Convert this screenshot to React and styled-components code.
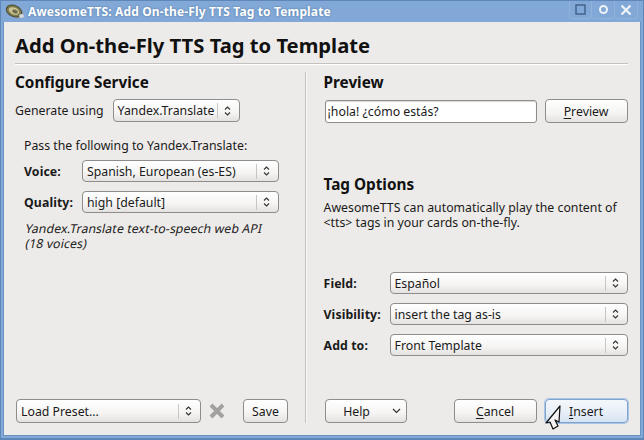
import styled, { createGlobalStyle } from 'styled-components';

const GlobalStyle = createGlobalStyle`
    html, body {
        margin: 0;
        padding: 0;
        background: #81a8d6;
    }
    * {
        box-sizing: border-box;
    }
`;

const Window = styled.div`
    position: relative;
    width: 644px;
    height: 440px;
    display: flex;
    flex-direction: column;
    background: #81a8d6;
    border: 1px solid #5f87ba;
    border-bottom-width: 2px;
    overflow: hidden;
    font-family: "Noto Sans", "Open Sans", sans-serif;
    font-size: 12.3px;
    color: #1a1a1a;
`;

const TitleBar = styled.div`
    height: 21px;
    flex: none;
    display: flex;
    align-items: center;
    padding: 0 5px 0 4px;
    color: #fff;
    font-weight: 700;
    font-size: 12px;
    letter-spacing: 0.14px;
    text-shadow: 0 0 2px #4d709c;
`;

const TitleText = styled.div`
    flex: 1;
    margin-left: 3px;
    white-space: nowrap;
`;

const WinButtons = styled.div`
    display: flex;
    margin-top: -3px;
`;

const WinButton = styled.div`
    width: 23px;
    height: 18px;
    display: flex;
    align-items: center;
    justify-content: center;
    border: 1px solid #90b3dc;
    border-top: none;
    border-left-width: ${p => (p.$first ? '1px' : '0')};
    border-radius: 0 0 3px 3px;
`;

const Body = styled.div`
    flex: 1;
    min-height: 0;
    margin: 0 2px 2px 2px;
    background: #edebe9;
    border: 1px solid #6c92c2;
    border-top: none;
    display: flex;
    flex-direction: column;
    padding: 0 12px 12px 11px;
`;

const Heading = styled.h1`
    margin: 0;
    height: 42px;
    padding-top: 9px;
    font-size: 20.2px;
    line-height: 28px;
    font-weight: 700;
    color: #111;
    white-space: nowrap;
    border-bottom: 1px solid #c4c2c0;
    box-shadow: 0 1px 0 #fff;
`;

const Columns = styled.div`
    flex: 1;
    min-height: 0;
    display: flex;
    padding-top: 8px;
`;

const Column = styled.div`
    display: flex;
    flex-direction: column;
    min-width: 0;
    width: ${p => p.$width}px;
`;

const Separator = styled.div`
    width: 1px;
    flex: none;
    margin: 0 18px 0 15px;
    background: #c4c2c0;
    box-shadow: 1px 0 0 #f8f7f6;
`;

const SectionTitle = styled.h2`
    margin: 0;
    font-size: 15.3px;
    line-height: 20px;
    font-weight: 700;
    color: #111;
    white-space: nowrap;
`;

const Row = styled.div`
    display: flex;
    align-items: center;
    margin-top: ${p => p.$top || 0}px;
    padding-left: ${p => p.$inset || 0}px;
    padding-right: ${p => p.$right || 0}px;
`;

const PlainLabel = styled.span`
    white-space: nowrap;
    margin-right: ${p => p.$gap || 0}px;
`;

const FieldLabel = styled.span`
    font-weight: 700;
    white-space: nowrap;
    width: ${p => p.$width}px;
    flex: none;
    letter-spacing: 0.1px;
`;

const Combo = styled.div`
    display: flex;
    align-items: center;
    width: ${p => (p.$width ? `${p.$width}px` : 'auto')};
    flex: ${p => (p.$width ? 'none' : 1)};
    height: ${p => p.$height || 22}px;
    padding: 0 7px 0 4px;
    border: 1px solid #8f8d8b;
    border-radius: 4px;
    background: linear-gradient(#ffffff, #f5f4f3 60%, #e4e2e0);
    white-space: nowrap;
`;

const ComboText = styled.span`
    flex: 1;
`;

const ComboDivider = styled.span`
    width: 1px;
    height: 15px;
    background: #c8c6c4;
    margin-right: 5px;
`;

const PassLine = styled.div`
    margin: 15px 0 0 9px;
    line-height: 17px;
    white-space: nowrap;
`;

const Note = styled.div`
    margin: 8px 0 0 9px;
    color: #222;
`;

const NoteLine = styled.div`
    height: 15px;
    line-height: 15px;
    letter-spacing: 0.1px;
    white-space: nowrap;
    transform: skewX(-12deg);
    transform-origin: 0 100%;
`;

const Footer = styled.div`
    margin-top: auto;
    padding-left: 1px;
    display: flex;
    align-items: center;
`;

const Button = styled.div`
    display: flex;
    align-items: center;
    justify-content: center;
    flex: none;
    width: ${p => p.$width}px;
    height: ${p => p.$height || 24}px;
    margin-left: ${p => p.$left || 0}px;
    border: 1px solid ${p => (p.$focus ? '#7ea3cf' : '#8f8d8b')};
    border-radius: 4px;
    background: ${p => (p.$focus
        ? 'linear-gradient(#f4f8fc, #e6eef7 60%, #d5e2f0)'
        : 'linear-gradient(#ffffff, #f5f4f3 60%, #e4e2e0)')};
    box-shadow: ${p => (p.$focus ? '0 0 0 1px #a9c4e4' : 'none')};
`;

const Mnemonic = styled.span`
    text-decoration: underline;
    text-underline-offset: 2px;
`;

const TextInput = styled.div`
    width: 212px;
    height: 23px;
    flex: none;
    display: flex;
    align-items: center;
    padding-left: 2px;
    background: #fff;
    border: 1px solid #8f8d8b;
    border-radius: 3px;
    box-shadow: inset 0 1px 1px #d8d8d8;
    white-space: nowrap;
`;

const Description = styled.div`
    margin-top: 6px;
`;

const DescriptionLine = styled.div`
    height: 15px;
    line-height: 15px;
    white-space: nowrap;
`;

const Spacer = styled.div`
    height: ${p => p.$height}px;
    flex: none;
`;

const HelpLabel = styled.span`
    flex: 1;
    text-align: center;
    padding-right: 4px;
`;

const Cursor = styled.svg`
    position: absolute;
    left: 543px;
    top: 404px;
`;

const Updown = () => (
    <svg width="9" height="12" viewBox="0 0 9 12" fill="none" stroke="#333" strokeWidth="1.1">
        <path d="M2 4.5 L4.5 2 L7 4.5" />
        <path d="M2 7.5 L4.5 10 L7 7.5" />
    </svg>
);

const Select = ({ value, width, height }) => (
    <Combo $width={width} $height={height}>
        <ComboText>{value}</ComboText>
        <ComboDivider />
        <Updown />
    </Combo>
);

const Speaker = () => (
    <svg width="20" height="17" viewBox="0 0 20 17">
        <path d="M6 2 L17 7 L19 13 L13 16 L3 10 Z" fill="#8e9aa8" />
        <ellipse cx="9" cy="8" rx="8" ry="5.5" fill="#7d7a4c" stroke="#4c4a30" strokeWidth="1" transform="rotate(22 9 8)" />
        <ellipse cx="9" cy="8" rx="5.5" ry="3.4" fill="#c9c596" transform="rotate(22 9 8)" />
        <ellipse cx="10" cy="8.5" rx="3" ry="1.8" fill="#6f6c4a" transform="rotate(22 10 8.5)" />
        <ellipse cx="16.5" cy="13" rx="2.5" ry="2" fill="#d5d8dc" />
    </svg>
);

const App = () => (
    <>
        <GlobalStyle />
        <Window>
            <TitleBar>
                <Speaker />
                <TitleText>AwesomeTTS: Add On-the-Fly TTS Tag to Template</TitleText>
                <WinButtons>
                    <WinButton $first>
                        <svg width="11" height="11" viewBox="0 0 11 11" fill="none" stroke="#3f5f88" strokeWidth="1.4">
                            <rect x="1" y="1" width="9" height="9" />
                        </svg>
                    </WinButton>
                    <WinButton>
                        <svg width="11" height="11" viewBox="0 0 11 11" fill="none" stroke="#eef3fa" strokeWidth="2">
                            <circle cx="5.5" cy="5.5" r="3.5" />
                        </svg>
                    </WinButton>
                    <WinButton>
                        <svg width="12" height="12" viewBox="0 0 12 12" fill="none" stroke="#eef3fa" strokeWidth="2.2">
                            <path d="M1.5 1.5 L10.5 10.5 M10.5 1.5 L1.5 10.5" />
                        </svg>
                    </WinButton>
                </WinButtons>
            </TitleBar>
            <Body>
                <Heading>Add On-the-Fly TTS Tag to Template</Heading>
                <Columns>
                    <Column $width={275}>
                        <SectionTitle>Configure Service</SectionTitle>
                        <Row $top={7}>
                            <PlainLabel $gap={9}>Generate using</PlainLabel>
                            <Select value="Yandex.Translate" width={127} height={23} />
                        </Row>
                        <PassLine>Pass the following to Yandex.Translate:</PassLine>
                        <Row $top={6} $inset={9} $right={11}>
                            <FieldLabel $width={58}>Voice:</FieldLabel>
                            <Select value="Spanish, European (es-ES)" />
                        </Row>
                        <Row $top={9} $inset={9} $right={11}>
                            <FieldLabel $width={58}>Quality:</FieldLabel>
                            <Select value="high [default]" />
                        </Row>
                        <Note>
                            <NoteLine>Yandex.Translate text-to-speech web API</NoteLine>
                            <NoteLine>(18 voices)</NoteLine>
                        </Note>
                        <Footer>
                            <Select value="Load Preset..." width={185} height={24} />
                            <svg width="16" height="16" viewBox="0 0 16 16" fill="none" stroke="#a3a19f" strokeWidth="4" style={{ margin: '0 0 0 8px' }}>
                                <path d="M2 2 L14 14 M14 2 L2 14" />
                            </svg>
                            <Button $width={45} $left={18}>Save</Button>
                        </Footer>
                    </Column>
                    <Separator />
                    <Column $width={305}>
                        <SectionTitle>Preview</SectionTitle>
                        <Row $top={7} $inset={1}>
                            <TextInput>¡hola! ¿cómo estás?</TextInput>
                            <Button $width={83} $left={8}><span><Mnemonic>P</Mnemonic>review</span></Button>
                        </Row>
                        <Spacer $height={51} />
                        <SectionTitle>Tag Options</SectionTitle>
                        <Description>
                            <DescriptionLine>AwesomeTTS can automatically play the content of</DescriptionLine>
                            <DescriptionLine>{'<tts> tags in your cards on-the-fly.'}</DescriptionLine>
                        </Description>
                        <Spacer $height={42} />
                        <Row>
                            <FieldLabel $width={66}>Field:</FieldLabel>
                            <Select value="Español" />
                        </Row>
                        <Row $top={9}>
                            <FieldLabel $width={66}>Visibility:</FieldLabel>
                            <Select value="insert the tag as-is" />
                        </Row>
                        <Row $top={9}>
                            <FieldLabel $width={66}>Add to:</FieldLabel>
                            <Select value="Front Template" />
                        </Row>
                        <Footer>
                            <Button $width={82}>
                                <HelpLabel>Help</HelpLabel>
                                <svg width="9" height="6" viewBox="0 0 9 6" fill="none" stroke="#333" strokeWidth="1.2" style={{ marginRight: 5 }}>
                                    <path d="M1 1 L4.5 4.5 L8 1" />
                                </svg>
                            </Button>
                            <Button $width={83} $left={47}><span><Mnemonic>C</Mnemonic>ancel</span></Button>
                            <Button $width={83} $left={8} $focus><span><Mnemonic>I</Mnemonic>nsert</span></Button>
                        </Footer>
                    </Column>
                </Columns>
            </Body>
            <Cursor width="20" height="26" viewBox="0 0 20 26">
                <path d="M16 1 L15 17 L11 15 L14 21 L9 24 L6 17 L2 18 Z" fill="#f4f4f4" stroke="#111" strokeWidth="1.2" strokeLinejoin="round" />
            </Cursor>
        </Window>
    </>
);

export default App;
